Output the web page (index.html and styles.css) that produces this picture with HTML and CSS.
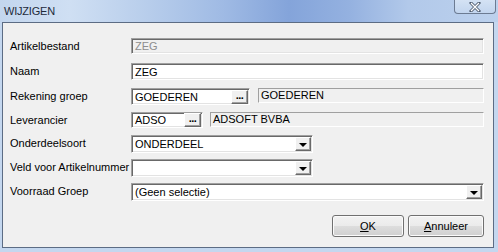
FILE: index.html
```html
<!DOCTYPE html>
<html>
<head>
    <meta charset="UTF-8">
    <title>WIJZIGEN</title>
    <link rel="stylesheet" href="styles.css">
</head>
<body>
    <div class="window">
        <div class="titlebar">
            <span class="title">WIJZIGEN</span>
            <div class="close">
                <svg width="12" height="10" viewBox="0 0 12 10">
                    <path d="M2 1 L10 9 M10 1 L2 9" stroke="#4d5a6e" stroke-width="3" stroke-linecap="square"/>
                    <path d="M2 1 L10 9 M10 1 L2 9" stroke="#ffffff" stroke-width="1.3"/>
                </svg>
            </div>
        </div>

        <div class="frame">
            <div class="panel">
                <div class="form">
                    <label>Artikelbestand</label>
                    <div class="field disabled">ZEG</div>

                    <label>Naam</label>
                    <div class="field">ZEG</div>

                    <label>Rekening groep</label>
                    <div class="combo">
                        <div class="field lookup w-rek"><span class="value">GOEDEREN</span><span class="dots">...</span></div>
                        <div class="info">GOEDEREN</div>
                    </div>

                    <label>Leverancier</label>
                    <div class="combo lev">
                        <div class="field lookup w-lev"><span class="value">ADSO</span><span class="dots">...</span></div>
                        <div class="info">ADSOFT BVBA</div>
                    </div>

                    <label>Onderdeelsoort</label>
                    <div class="field select w-sel"><span class="value">ONDERDEEL</span><span class="drop"><i></i></span></div>

                    <label>Veld voor Artikelnummer</label>
                    <div class="field select w-sel"><span class="value"></span><span class="drop"><i></i></span></div>

                    <label>Voorraad Groep</label>
                    <div class="field select"><span class="value">(Geen selectie)</span><span class="drop"><i></i></span></div>
                </div>

                <div class="actions">
                    <button class="btn btn-ok"><u>O</u>K</button>
                    <button class="btn btn-cancel"><u>A</u>nnuleer</button>
                </div>
            </div>
        </div>
    </div>
</body>
</html>
```

FILE: styles.css
```css
* {
    margin: 0;
    padding: 0;
    box-sizing: border-box;
}

body {
    background: #c4d7ef;
    font-family: 'Liberation Sans', Arial, sans-serif;
    font-size: 11px;
    color: #000;
}

.window {
    width: 498px;
    height: 252px;
    display: flex;
    flex-direction: column;
    background: #c4d7ef;
}

.titlebar {
    height: 22px;
    flex: none;
    display: flex;
    justify-content: space-between;
    align-items: flex-start;
    background: linear-gradient(90deg, #c3d6ee 0%, #cfdff3 14%, #b7cdeb 30%, #9fbae4 45%, #84a4da 58%, #94b1e0 70%, #b2c9ea 82%, #bcd1ed 100%);
}

.title {
    margin: 5px 0 0 4px;
    font-size: 11px;
    color: #1e2a3a;
    letter-spacing: -0.2px;
}

.close {
    width: 42px;
    height: 14px;
    margin-right: 2px;
    border: 1px solid #6c7b92;
    border-top: none;
    border-radius: 0 0 4px 4px;
    background: linear-gradient(#d4e2f4, #c2d5ee);
    display: flex;
    justify-content: center;
    align-items: center;
}

.frame {
    flex: 1;
    display: flex;
    padding: 0 4px 4px 2px;
}

.panel {
    flex: 1;
    background: #f0f0f0;
    border: 1px solid #5c6c84;
    padding: 15px 9px 0 7px;
}

.form {
    display: grid;
    grid-template-columns: 121px 1fr;
    grid-template-rows: 25px 25px 24px 23px 24px 24px 18px;
}

.form label {
    line-height: 17px;
    align-self: start;
    padding-top: 0;
}

.field {
    height: 17px;
    align-self: start;
    display: flex;
    align-items: center;
    background: #fff;
    border: 1px solid;
    border-color: #a0a0a0 #ffffff #ffffff #a0a0a0;
    box-shadow: inset 1px 1px 0 #696969, inset -1px -1px 0 #e3e3e3;
    padding-left: 3px;
    white-space: nowrap;
}

.field.disabled {
    height: 16px;
    background: #f0f0f0;
    color: #8d8d8d;
}

.value {
    flex: 1;
}

.combo {
    display: flex;
    align-items: flex-start;
    gap: 8px;
}

.combo.lev {
    gap: 7px;
}

.w-rek {
    width: 119px;
}

.w-lev {
    width: 72px;
    height: 16px;
}

.w-sel {
    width: 182px;
}

.info {
    flex: 1;
    height: 15px;
    line-height: 13px;
    padding-left: 2px;
    border-top: 1px solid #a0a0a0;
    border-left: 1px solid #a0a0a0;
    border-bottom: 1px solid #ffffff;
    border-right: 1px solid #ffffff;
    white-space: nowrap;
}

.dots {
    width: 17px;
    height: 14px;
    margin-right: 1px;
    background: #f0f0f0;
    border: 1px solid;
    border-color: #ffffff #696969 #696969 #ffffff;
    box-shadow: inset -1px -1px 0 #a0a0a0;
    font-weight: 700;
    font-size: 11px;
    line-height: 8px;
    text-align: center;
    letter-spacing: -0.5px;
}

.select {
    height: 18px;
}

.drop {
    width: 16px;
    height: 14px;
    margin-right: 1px;
    background: #f0f0f0;
    border: 1px solid;
    border-color: #ffffff #696969 #696969 #ffffff;
    box-shadow: inset -1px -1px 0 #a0a0a0;
    display: flex;
    justify-content: center;
    align-items: center;
}

.drop i {
    width: 0;
    height: 0;
    border-left: 4px solid transparent;
    border-right: 4px solid transparent;
    border-top: 4px solid #000;
    margin-top: 1px;
}

.actions {
    display: flex;
    justify-content: flex-end;
    gap: 4px;
    margin-top: 14px;
}

.btn {
    height: 22px;
    border: 1px solid #707070;
    border-radius: 3px;
    background: linear-gradient(#f2f2f2 0%, #ebebeb 48%, #dddddd 52%, #cfcfcf 100%);
    box-shadow: inset 0 0 0 1px #fbfbfb;
    font-family: 'Liberation Sans', Arial, sans-serif;
    font-size: 11px;
    color: #000;
}

.btn-ok {
    width: 72px;
}

.btn-cancel {
    width: 76px;
}
```
